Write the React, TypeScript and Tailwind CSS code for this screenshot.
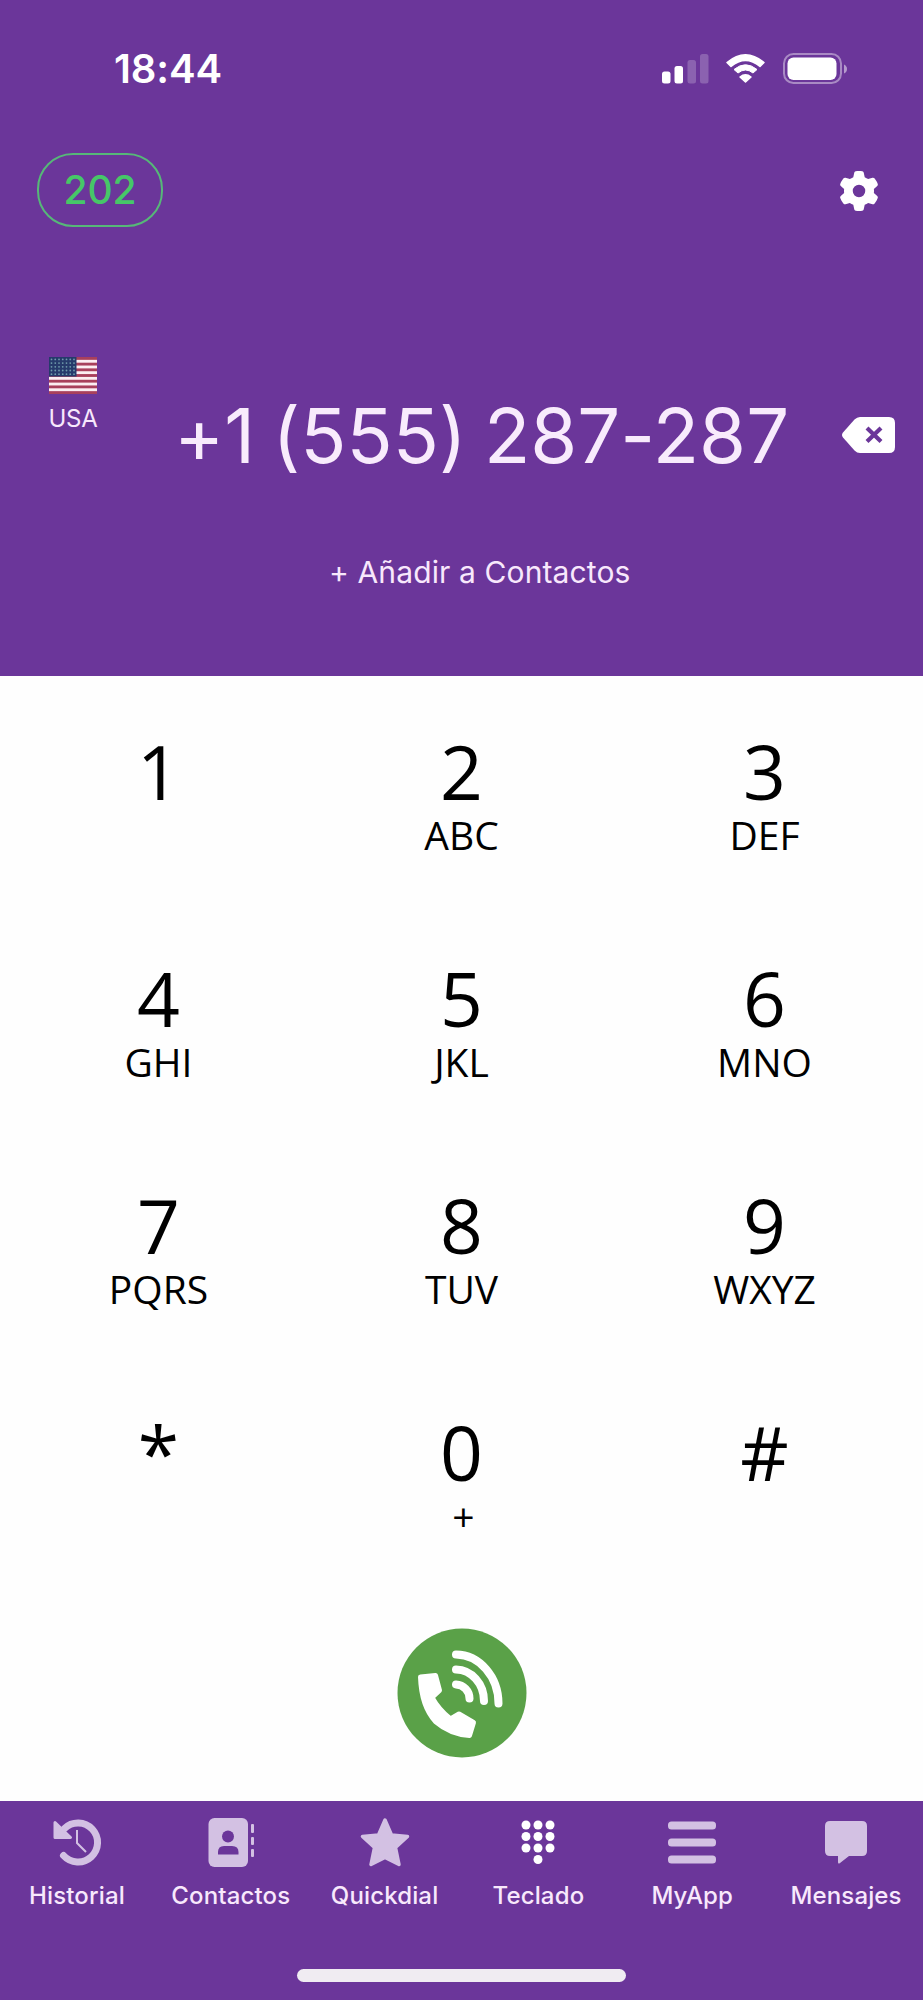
import type { ReactNode } from "react";
import { FaGear } from "react-icons/fa6";

const keys = [
  ["1", ""], ["2", "ABC"], ["3", "DEF"],
  ["4", "GHI"], ["5", "JKL"], ["6", "MNO"],
  ["7", "PQRS"], ["8", "TUV"], ["9", "WXYZ"],
  ["*", ""], ["0", "+"], ["#", ""],
];

function StatusBar() {
  return (
    <div className="flex h-[136px] items-start justify-between pl-[114px] pr-[76px] pt-[46px]">
      <span className="text-[40px] font-semibold leading-[46px] tracking-[-0.100px] text-white">18:44</span>
      <div className="flex pt-[6px]">
        <svg className="h-[34px] w-[188px]" viewBox="0 0 188 34" fill="white">
          <rect x="3" y="19.500" width="8.500" height="12" rx="2.500" />
          <rect x="15.500" y="14" width="8.500" height="17.500" rx="2.500" />
          <rect x="28.500" y="8" width="8.500" height="23.500" rx="2.500" opacity=".22" />
          <rect x="41" y="2" width="8.500" height="29.500" rx="2.500" opacity=".22" />
          <path d="M68 10.500Q86.500 -5 105 10.500L101 14.500Q86.500 2.500 72 14.500Z" stroke="white" strokeWidth="1.500" strokeLinejoin="round" />
          <path d="M75 17.500Q86.500 8 98 17.500L94 21Q86.500 15 79 21Z" stroke="white" strokeWidth="1" strokeLinejoin="round" />
          <path d="M81 25Q86.500 20.500 92 25L86.500 30Z" stroke="white" strokeWidth="1.500" strokeLinejoin="round" />
          <rect x="125" y="2" width="57" height="29" rx="9.500" fill="none" stroke="white" strokeWidth="2" opacity=".42" />
          <rect x="128.500" y="5.500" width="49" height="22.500" rx="6" />
          <path d="M185 12.500Q188 14 188 17T185 21.500Z" opacity=".5" />
        </svg>
      </div>
    </div>
  );
}

function Flag() {
  const stripes = [0, 2, 4, 6, 8, 10, 12];
  const stars = Array.from({ length: 35 }, (_, i) => i);
  return (
    <svg className="h-[37px] w-[48px]" viewBox="0 0 48 37">
      <rect width="48" height="37" fill="#fbeef2" />
      {stripes.map((s) => (
        <rect key={s} y={s * 2.846} width="48" height="2.846" fill="#a8405c" />
      ))}
      <rect width="27.500" height="19.500" fill="#263a6b" />
      {stars.map((s) => (
        <circle key={s} cx={2.500 + (s % 7) * 3.750} cy={2.400 + Math.floor(s / 7) * 3.700} r=".9" fill="#6f9bab" />
      ))}
    </svg>
  );
}

function Tab({ label, children }: { label: string; children: ReactNode }) {
  return (
    <button className="flex flex-1 flex-col items-center text-[#d3c1e3]">
      <svg className="h-[54px] w-[54px]" viewBox="0 0 54 54" fill="currentColor">
        {children}
      </svg>
      <span className="mt-[12px] whitespace-nowrap text-[24px] font-medium leading-[30px] tracking-[0.150px] text-[#f8e8fc]">{label}</span>
    </button>
  );
}

export default function App() {
  return (
    <div className="flex h-[2000px] w-[923px] flex-col overflow-hidden bg-[#fefefe] font-['Inter',sans-serif]">
      <header className="h-[676px] bg-[#6b369a]">
        <StatusBar />
        <div className="flex items-center justify-between pl-[37px] pr-[44px] pt-[17px]">
          <div className="flex h-[74px] w-[126px] items-center justify-center rounded-[36px] border-2 border-[#56b878] text-[39px] font-medium leading-[46px] text-[#46c768]">202</div>
          <FaGear className="mt-px h-[40px] w-[40px] text-white" />
        </div>
        <div className="flex h-[176px] items-start pl-[49px] pt-[130px]">
          <div className="flex w-[48px] flex-col items-center">
            <Flag />
            <span className="mt-[10px] text-[24px] leading-[30px] tracking-[-0.300px] text-[#f8e8fc]">USA</span>
          </div>
          <div className="ml-[77px] w-[667px] whitespace-nowrap pt-[33px] text-[76px] leading-[90px] [font-feature-settings:'calt'_0] [word-spacing:-4px] text-[#f8ebfc]">+1 (555) 287-287</div>
          <svg className="mt-[59px] h-[38px] w-[55px] shrink-0" viewBox="0 0 55 38">
            <path d="M19 1H48Q54 1 54 7V31Q54 37 48 37H19Q16 37 13.500 34.500L2 21.500Q0 19 2 16.500L13.500 3.500Q16 1 19 1Z" fill="white" />
            <path d="M26 12L40 25.500M40 12L26 25.500" stroke="#6b369a" strokeWidth="4.200" />
          </svg>
        </div>
        <div className="pl-[329px] pt-[151px]">
          <button className="whitespace-nowrap text-[30px] leading-[36px] tracking-[0.120px] text-[#f8e8fc]">+ Añadir a Contactos</button>
        </div>
      </header>

      <main className="h-[1125px]">
        <div className="grid auto-rows-[227px] grid-cols-3 px-[7px] pt-[57px] font-['Open_Sans',sans-serif] text-black">
          {keys.map(([digit, letters]) => (
            <button key={digit} className="flex flex-col items-center">
              <span className="text-[75px] leading-[76px]">{digit}</span>
              <span className={letters === "+" ? "mt-[6px] pl-[4px] text-[39px] leading-[40px]" : "mt-[6px] text-[39px] leading-[40px]"}>{letters}</span>
            </button>
          ))}
        </div>
        <div className="-mt-[13px] flex justify-center">
          <svg className="h-[130px] w-[130px]" viewBox="0 0 130 130">
            <circle cx="65" cy="65" r="64.500" fill="#5aa148" />
            <path d="M23.500 49L38.500 47.500L42.500 62.500L35 69.500Q42 82 53.500 91L62 86L76.500 94.500L72.500 107.500Q53 106 38.500 93.500Q24.500 78.500 23.500 49Z" fill="white" stroke="white" strokeWidth="5" strokeLinejoin="round" />
            <path d="M59 26.500A43 49 0 0 1 101.500 75.500M59 41.500A28.500 31.500 0 0 1 87 73M59 56.500A14 14 0 0 1 72.500 70.500" fill="none" stroke="white" strokeWidth="8" strokeLinecap="round" />
          </svg>
        </div>
      </main>

      <footer className="flex h-[199px] flex-col items-center bg-[#6b369a] pt-[14px]">
        <nav className="flex w-full">
          <Tab label="Historial">
            <path d="M14.500 13.500A19.500 19.500 0 1 1 13.500 40.500" fill="none" stroke="currentColor" strokeWidth="7" strokeLinecap="round" />
            <path d="M5 7.500L20.500 22.500H5Z" stroke="currentColor" strokeWidth="3" strokeLinejoin="round" />
            <path d="M27 15V28L36 37" fill="none" stroke="currentColor" strokeWidth="2" />
          </Tab>
          <Tab label="Contactos">
            <rect x="4.500" y="3" width="39.500" height="49" rx="6" />
            <circle cx="24" cy="21.500" r="6" fill="#6b369a" />
            <path d="M14 39.500V37Q14 31 20 31H28Q34.500 31 34.500 37V39.500Z" fill="#6b369a" />
            <rect x="47" y="9" width="3" height="9" rx="1" />
            <rect x="47" y="22" width="3" height="8" rx="1" />
            <rect x="47" y="34" width="3" height="8" rx="1" />
          </Tab>
          <Tab label="Quickdial">
            <path d="M27 5L33.500 20L49.500 21.500L37.500 32.500L41 49.500L27 42.500L13 49.500L16.500 32.500L4.500 21.500L20.500 20Z" stroke="currentColor" strokeWidth="3.500" strokeLinejoin="round" />
          </Tab>
          <Tab label="Teclado">
            <g fill="white">
              {[0, 1, 2, 3, 4, 5, 6, 7, 8].map((i) => (
                <circle key={i} cx={15 + (i % 3) * 12} cy={10 + Math.floor(i / 3) * 11.500} r="4.500" />
              ))}
              <circle cx="27" cy="44.500" r="4.500" />
            </g>
          </Tab>
          <Tab label="MyApp">
            <rect x="3" y="6.500" width="48" height="8" rx="3.500" />
            <rect x="3" y="23.500" width="48" height="8" rx="3.500" />
            <rect x="3" y="40.500" width="48" height="8" rx="3.500" />
          </Tab>
          <Tab label="Mensajes">
            <path d="M11 6H43Q48 6 48 11V36Q48 41 43 41H30L21 48Q19 49.500 19 47V41H11Q6 41 6 36V11Q6 6 11 6Z" />
          </Tab>
        </nav>
        <div className="mt-[58px] h-[13px] w-[329px] rounded-full bg-[#f0ecf2]" />
      </footer>
    </div>
  );
}
